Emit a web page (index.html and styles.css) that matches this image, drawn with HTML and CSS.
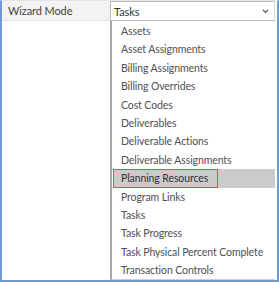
FILE: index.html
```html
<!DOCTYPE html>
<html lang="en">

<head>
  <meta charset="UTF-8">
  <title>Wizard Mode</title>
  <link rel="stylesheet" href="styles.css">
</head>

<body>
  <div class="frame">
    <div class="row">
      <div class="label">Wizard Mode</div>
      <div class="field">
        <div class="select">
          <span>Tasks</span>
          <svg class="chev" width="7" height="5" viewBox="0 0 7 5"><path d="M1 1 L3.5 3.5 L6 1" fill="none" stroke="#555" stroke-width="1.2"/></svg>
        </div>
        <div class="list">
          <div class="item">Assets</div>
          <div class="item">Asset Assignments</div>
          <div class="item">Billing Assignments</div>
          <div class="item">Billing Overrides</div>
          <div class="item">Cost Codes</div>
          <div class="item">Deliverables</div>
          <div class="item">Deliverable Actions</div>
          <div class="item">Deliverable Assignments</div>
          <div class="item active"><span class="mark">Planning Resources</span></div>
          <div class="item">Program Links</div>
          <div class="item">Tasks</div>
          <div class="item">Task Progress</div>
          <div class="item">Task Physical Percent Complete</div>
          <div class="item">Transaction Controls</div>
        </div>
      </div>
    </div>
  </div>
</body>

</html>
```

FILE: styles.css
```css
html,
body {
  margin: 0;
  background: #fff;
}

body {
  font-family: Lato, "Liberation Sans", sans-serif;
  font-size: 10.5px;
  letter-spacing: -0.1px;
  color: #505050;
}

.frame {
  width: 279px;
  height: 282px;
  box-sizing: border-box;
  border-left: 2px solid #6f9bd2;
  border-right: 2px solid #6f9bd2;
  border-bottom: 2px solid #6f9bd2;
  border-top: 1px solid #dfe7f1;
  background: #fff;
}

.row {
  display: grid;
  grid-template-columns: 108px 1fr;
  height: 100%;
}

.label {
  height: 19px;
  line-height: 19px;
  padding-left: 6px;
  background: #f4f2f2;
  border-bottom: 1px solid #e6e0e0;
  color: #444;
  font-size: 11px;
}

.field {
  display: flex;
  flex-direction: column;
  padding-right: 2px;
}

.select {
  height: 18px;
  display: flex;
  align-items: center;
  justify-content: space-between;
  padding: 0 5px 0 3px;
  border: 1px solid #bcbcbc;
  border-right-color: #d9d9d9;
  background: #fff;
  color: #333;
  font-size: 11px;
}

.chev {
  margin-top: 1px;
}

.list {
  flex: 1;
  border-left: 2px solid #a8a8a8;
  border-bottom: 1px solid #d0d0d0;
  padding-top: 1px;
}

.item {
  height: 18.4px;
  line-height: 18px;
  padding-left: 9px;
  white-space: nowrap;
}

.item.active {
  background: #cbcbcb;
  margin-left: 1px;
  padding-left: 0;
}

.mark {
  display: inline-block;
  height: 17px;
  line-height: 17px;
  padding: 0 9px 0 7px;
  border: 1px solid #e4485a;
  color: #333;
}
```
